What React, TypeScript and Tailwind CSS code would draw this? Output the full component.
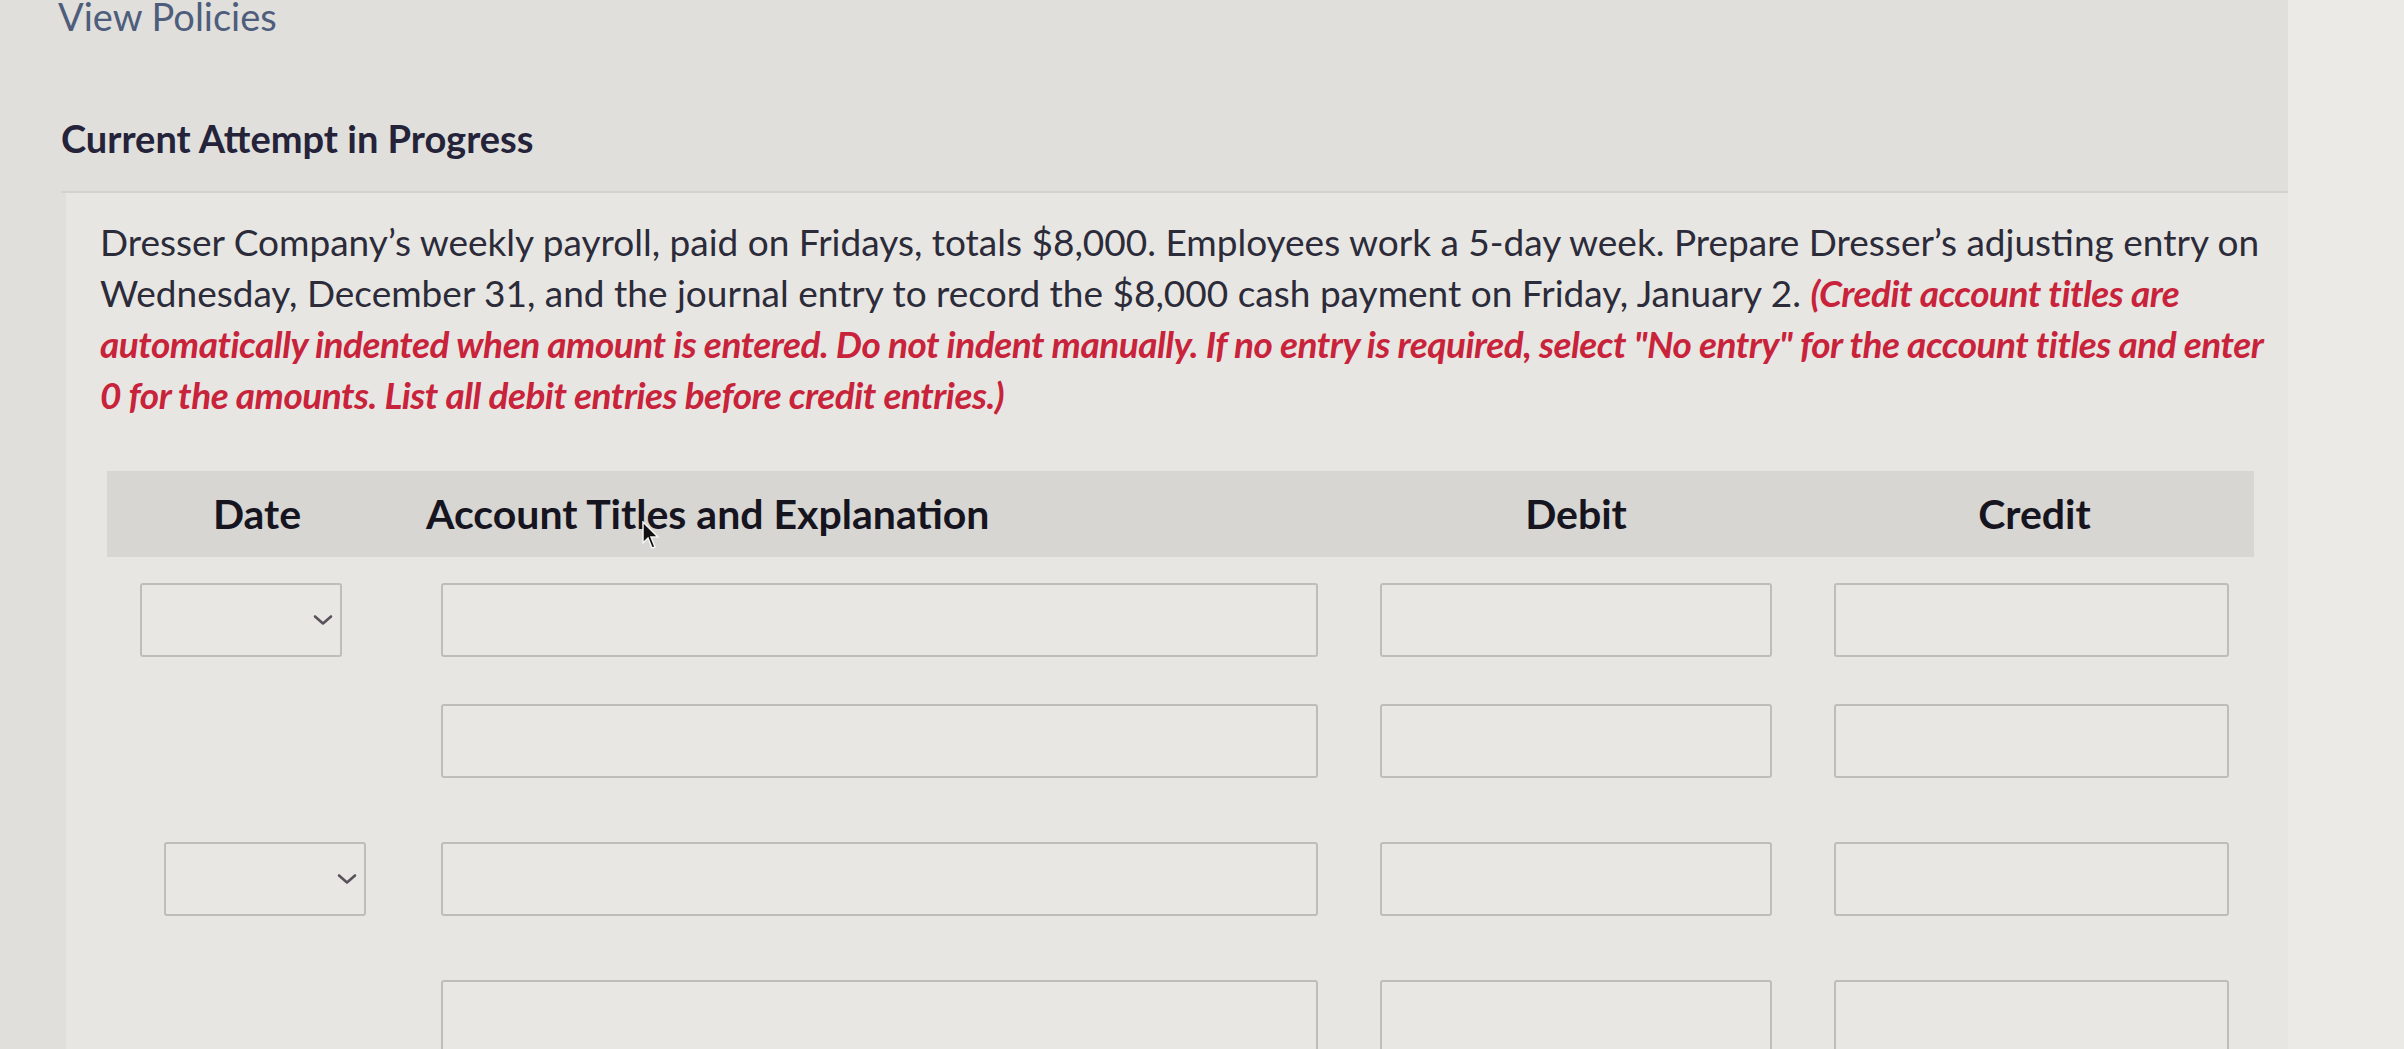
import React from 'react';

const font = { fontFamily: 'Lato, "Open Sans", sans-serif' };

function Chevron() {
  return (
    <svg width="20" height="11" viewBox="0 0 20 11" fill="none" className="absolute right-[7px] top-1/2 -translate-y-1/2">
      <path d="M2 2 L10 9 L18 2" stroke="#57525c" strokeWidth="2.6" strokeLinecap="round" strokeLinejoin="round" />
    </svg>
  );
}

function DateSelect({ offset }: { offset: string }) {
  return (
    <div className={`relative h-[74px] w-[202px] rounded-[3px] border-2 border-[#bfbdba] bg-[#e8e7e3] ${offset}`}>
      <Chevron />
    </div>
  );
}

function Box({ cls }: { cls: string }) {
  return <div className={`h-[74px] rounded-[3px] border-2 border-[#bfbdba] bg-[#e8e7e3] ${cls}`} />;
}

type Row = { date: boolean; dateOffset?: string; mt: string };

const rows: Row[] = [
  { date: true, dateOffset: 'ml-[33px]', mt: 'mt-[26px]' },
  { date: false, mt: 'mt-[47px]' },
  { date: true, dateOffset: 'ml-[57px]', mt: 'mt-[64px]' },
  { date: false, mt: 'mt-[64px]' },
];

export default function App() {
  return (
    <div className="flex h-[1049px] w-full overflow-hidden bg-[#e0dfdb]" style={font}>
      <div className="w-[2288px] shrink-0">
        <div className="pl-[58px] text-[38px] leading-[32px] text-[#4e5d7c]">View Policies</div>

        <h2 className="mt-[86px] pl-[61px] text-[38px] font-bold leading-[40px] text-[#24233a]">
          Current Attempt in Progress
        </h2>

        <div className="ml-[61px] mt-[33px] border-t-2 border-[#d3d2ce]" />

        <div className="ml-[66px] bg-[#e7e6e2] pb-[40px]">
          <p className="pl-[34px] pt-[23px] text-[37px] leading-[51px] text-[#2c2b3a]">
            Dresser Company’s weekly payroll, paid on Fridays, totals $8,000. Employees work a 5-day week. Prepare
            Dresser’s adjusting entry on
            <br />
            Wednesday, December 31, and the journal entry to record the $8,000 cash payment on Friday, January 2.{' '}
            <span className="font-bold italic tracking-[-0.5px] text-[#c8233a]">
              (Credit account titles are
              <br />
              automatically indented when amount is entered. Do not indent manually. If no entry is required, select "No
              entry" for the account titles and enter
              <br />0 for the amounts. List all debit entries before credit entries.)
            </span>
          </p>

          <div className="ml-[41px] mt-[51px] w-[2147px]">
            <div className="relative grid h-[86px] grid-cols-[300px_942px_454px_451px] items-center bg-[#d7d6d2] text-[41px] font-bold text-[#16141f]">
              <div className="text-center">Date</div>
              <div className="pl-[19px]">Account Titles and Explanation</div>
              <div className="text-center">Debit</div>
              <div className="pl-[12px] text-center">Credit</div>
              <svg width="22" height="30" viewBox="0 0 22 30" className="absolute left-[534px] top-[50px]">
                <path d="M2 1 L2 22 L7 17 L11 27 L14 26 L10 16 L17 16 Z" fill="#111" stroke="#f4f4f4" strokeWidth="1.5" />
              </svg>
            </div>

            {rows.map((r, i) => (
              <div key={i} className={`grid grid-cols-[300px_942px_454px_451px] ${r.mt}`}>
                <div>{r.date && <DateSelect offset={r.dateOffset || ''} />}</div>
                <div className="pl-[34px]">
                  <Box cls="w-[877px]" />
                </div>
                <div className="pl-[31px]">
                  <Box cls="w-[392px]" />
                </div>
                <div className="pl-[31px]">
                  <Box cls="w-[395px]" />
                </div>
              </div>
            ))}
          </div>
        </div>
      </div>
      <div className="flex-1 bg-[#ebeae6]" />
    </div>
  );
}
